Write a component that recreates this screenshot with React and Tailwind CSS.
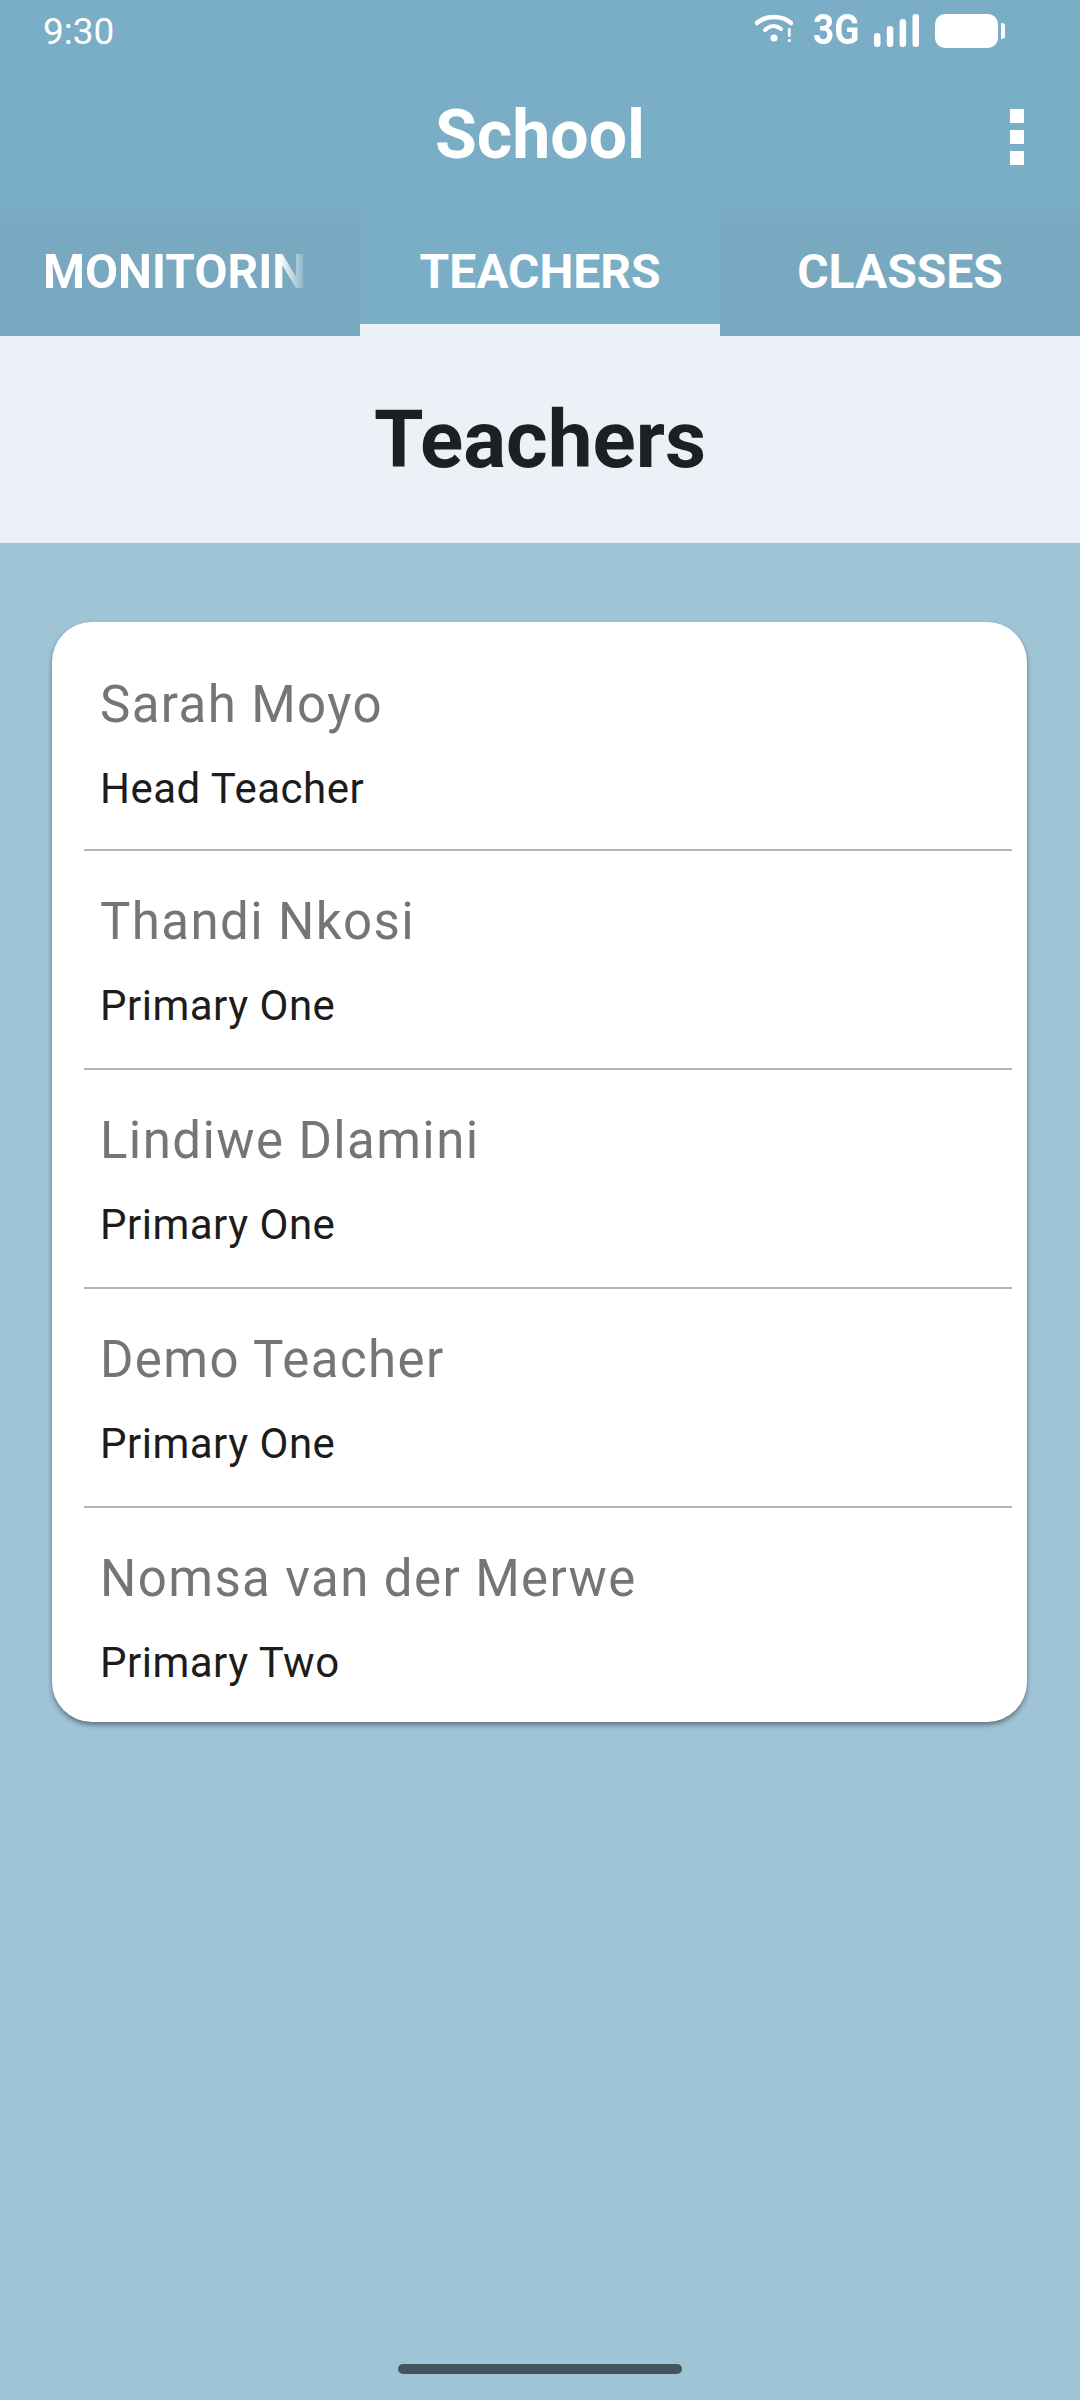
const teachers = [
  { name: 'Sarah Moyo', role: 'Head Teacher' },
  { name: 'Thandi Nkosi', role: 'Primary One' },
  { name: 'Lindiwe Dlamini', role: 'Primary One' },
  { name: 'Demo Teacher', role: 'Primary One' },
  { name: 'Nomsa van der Merwe', role: 'Primary Two' },
];

const StatusIcons = () => (
  <div className="flex items-start">
    <svg width="38" height="30" viewBox="0 0 38 30" fill="none" className="mr-[20px]">
      <path d="M2 9 C11 1 27 1 36 9" stroke="white" strokeWidth="4.5" strokeLinecap="round" />
      <path d="M10 16 C15 11 21 11 26 15" stroke="white" strokeWidth="4" strokeLinecap="round" />
      <circle cx="19" cy="24" r="3.5" fill="white" />
      <rect x="33" y="14" width="2.6" height="9" rx="1.3" fill="white" />
      <circle cx="34.3" cy="26.5" r="1.6" fill="white" />
    </svg>
    <span className="w-[45px] -mt-[6px] mr-[16px] font-['Roboto',sans-serif] font-bold text-[43px] leading-[43px] text-white [transform:scaleX(0.86)] origin-left">3G</span>
    <svg width="45" height="33" viewBox="0 0 45 33" className="mr-[16px]">
      <rect x="0" y="19" width="6.5" height="14" rx="3.2" fill="white" />
      <rect x="12.8" y="12" width="6.5" height="21" rx="3.2" fill="white" />
      <rect x="25.6" y="5" width="6.5" height="28" rx="3.2" fill="white" />
      <rect x="38.5" y="0" width="6.5" height="33" rx="3.2" fill="white" />
    </svg>
    <svg width="70" height="34" viewBox="0 0 70 34">
      <rect x="0" y="0" width="63" height="34" rx="10" fill="white" />
      <path d="M66 9 C69 9 70 10 70 12 V22 C70 24 69 25 66 25 Z" fill="white" />
    </svg>
  </div>
);

const App = () => {
  return (
    <div className="w-[1080px] h-[2400px] bg-[#9fc4d6] flex flex-col font-['Roboto',sans-serif] overflow-hidden relative">
      {/* Status bar + app bar */}
      <div className="bg-[#7aaec6]">
        <div className="h-[63px] pl-[43px] pr-[75px] flex items-start justify-between pt-[14px]">
          <span className="text-[37px] leading-[36px] text-white">9:30</span>
          <StatusIcons />
        </div>
        <div className="h-[144px] flex items-center justify-center relative">
          <h1 className="text-[68px] font-bold text-white leading-none">School</h1>
          <div className="absolute left-[1010px] top-[46px] flex flex-col gap-[7px]">
            <div className="w-[14px] h-[14px] bg-white" />
            <div className="w-[14px] h-[14px] bg-white" />
            <div className="w-[14px] h-[14px] bg-white" />
          </div>
        </div>
      </div>

      {/* Tabs */}
      <div className="h-[129px] flex">
        <div className="w-[360px] h-full bg-gradient-to-b from-[#7aaec6] to-[#79a9c1] to-[12%] flex items-center pl-[43px]">
          <div className="w-[265px] overflow-hidden [mask-image:linear-gradient(to_right,black_89%,transparent_100%)]">
            <span className="text-[48px] font-bold text-white leading-none whitespace-nowrap">MONITORING</span>
          </div>
        </div>
        <div className="w-[360px] h-full bg-[#7aaec6] flex flex-col border-b-[12px] border-[#ebf1f7] items-center justify-center">
          <span className="text-[48px] font-bold text-white leading-none pt-[12px]">TEACHERS</span>
        </div>
        <div className="w-[360px] h-full bg-gradient-to-b from-[#7aaec6] to-[#79a9c1] to-[12%] flex items-center justify-center">
          <span className="text-[48px] font-bold text-white leading-none">CLASSES</span>
        </div>
      </div>

      {/* Page heading */}
      <div className="h-[207px] bg-[#ebf1f7] flex items-center justify-center">
        <h2 className="text-[80px] font-bold text-[#1c2024] leading-none">Teachers</h2>
      </div>

      {/* Teacher list */}
      <div className="flex-1 pt-[79px] pl-[52px] pr-[53px]">
        <div className="bg-white rounded-[40px] shadow-[0_3px_5px_rgba(0,0,0,0.4)] h-[1100px] pl-[32px] pr-[15px]">
          {teachers.map((t, i) => (
            <div
              key={t.name}
              className={
                i === 0
                  ? 'h-[229px] pt-[53px] border-b-[2px] border-[#b4b4b4]'
                  : i < teachers.length - 1
                    ? 'h-[219px] pt-[41px] border-b-[2px] border-[#b4b4b4]'
                    : 'h-[214px] pt-[41px]'
              }
            >
              <div className="pl-[16px] text-[51px] leading-[60px] text-[#757575] tracking-[1.4px]">{t.name}</div>
              <div className="pl-[16px] mt-[30px] text-[42px] leading-[48px] text-[#1c1c1c] tracking-[0.5px]">{t.role}</div>
            </div>
          ))}
        </div>
      </div>

      {/* Home indicator */}
      <div className="absolute left-[398px] top-[2364px] w-[284px] h-[10px] rounded-full bg-[#44555d]" />
    </div>
  );
};

export default App;
